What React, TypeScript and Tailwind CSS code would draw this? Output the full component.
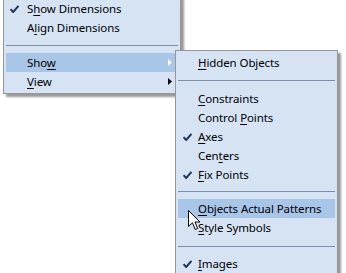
import React from "react";

type Item =
  | { kind: "sep"; h: string; line: string }
  | { kind: "item"; pre: string; key: string; post: string; checked?: boolean; hl?: boolean; arrow?: boolean };

const Check = () => (
  <svg width="9" height="8" viewBox="0 0 9 8">
    <path d="M0.5 4.2 L3.2 7 L8.5 0.8" fill="none" stroke="#1f3659" strokeWidth="2" />
  </svg>
);

const Row = ({ it, checkCol }: { it: Extract<Item, { kind: "item" }>; checkCol: string }) => (
  <div className={`flex h-[19px] items-center ${it.hl ? "bg-[#a8c6e8]" : ""}`}>
    <div className={`flex shrink-0 items-center ${checkCol}`}>{it.checked && <Check />}</div>
    <div className="whitespace-nowrap tracking-[-0.1px] text-black">
      {it.pre}
      <span className="underline underline-offset-2 decoration-1">{it.key}</span>
      {it.post}
    </div>
    {it.arrow && (
      <svg className="ml-auto mr-[6px]" width="4" height="7" viewBox="0 0 4 7">
        <path d="M0 0 L4 3.5 L0 7 Z" fill={it.hl ? "#ffffff" : "#000000"} />
      </svg>
    )}
  </div>
);

const Sep = ({ h, line }: { h: string; line: string }) => (
  <div className={`flex flex-col ${h} ${line}`}>
    <div className="h-px bg-[#7d8fa8]" />
  </div>
);

const leftItems: Item[] = [
  { kind: "item", pre: "S", key: "h", post: "ow Dimensions", checked: true },
  { kind: "item", pre: "A", key: "l", post: "ign Dimensions" },
  { kind: "sep", h: "h-[16px]", line: "pt-[8px]" },
  { kind: "item", pre: "Sho", key: "w", post: "", hl: true, arrow: true },
  { kind: "item", pre: "", key: "V", post: "iew", arrow: true },
];

const subItems: Item[] = [
  { kind: "item", pre: "", key: "H", post: "idden Objects" },
  { kind: "sep", h: "h-[17px]", line: "pt-[8px]" },
  { kind: "item", pre: "", key: "C", post: "onstraints" },
  { kind: "item", pre: "Control ", key: "P", post: "oints" },
  { kind: "item", pre: "", key: "A", post: "xes", checked: true },
  { kind: "item", pre: "Cen", key: "t", post: "ers" },
  { kind: "item", pre: "", key: "F", post: "ix Points", checked: true },
  { kind: "sep", h: "h-[15px]", line: "pt-[7px]" },
  { kind: "item", pre: "", key: "O", post: "bjects Actual Patterns", hl: true },
  { kind: "item", pre: "", key: "S", post: "tyle Symbols" },
  { kind: "sep", h: "h-[17px]", line: "pt-[9px]" },
  { kind: "item", pre: "", key: "I", post: "mages", checked: true },
];

export default function App() {
  return (
    <div
      className="relative h-[273px] w-[346px] overflow-hidden bg-white text-[11.5px] leading-none"
      style={{ fontFamily: '"Noto Sans", "Open Sans", sans-serif' }}
    >
      <div className="absolute left-[3px] top-[-4px] flex w-[178px] flex-col border border-[#979797] bg-[#d5e3f3] p-[2px] shadow-[3px_3px_2px_rgba(0,0,0,0.4)]">
        {leftItems.map((it, i) =>
          it.kind === "sep" ? (
            <Sep key={i} h={it.h} line={it.line} />
          ) : (
            <Row key={i} it={it} checkCol="w-[21px] pl-[4px]" />
          )
        )}
      </div>
      <div className="absolute left-[175px] top-[50px] flex h-[240px] w-[163px] flex-col border border-[#979797] bg-[#d5e3f3] p-[2px] shadow-[3px_3px_2px_rgba(0,0,0,0.4)]">
        {subItems.map((it, i) =>
          it.kind === "sep" ? (
            <Sep key={i} h={it.h} line={it.line} />
          ) : (
            <Row key={i} it={it} checkCol="w-[20px] pl-[5px]" />
          )
        )}
      </div>
      <svg className="absolute left-[188px] top-[210px]" width="13" height="21" viewBox="0 0 13 21">
        <path
          d="M0.5 0.5 L0.5 16.5 L4.5 12.8 L7.2 19.5 L9.6 18.5 L7 12 L12 12 Z"
          fill="#ffffff"
          stroke="#000000"
          strokeWidth="1"
        />
      </svg>
    </div>
  );
}
